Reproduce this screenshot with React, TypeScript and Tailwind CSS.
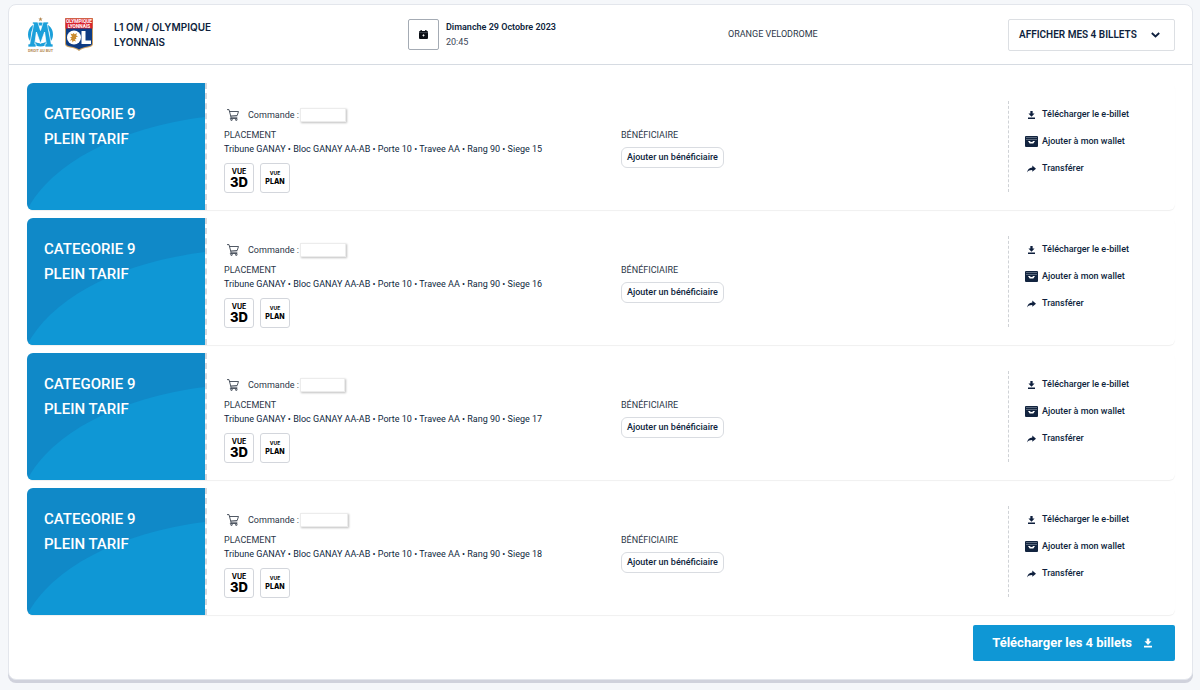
type Ticket = { seat: number; boxWidth: string };

const tickets: Ticket[] = [
  { seat: 15, boxWidth: "w-[46px]" },
  { seat: 16, boxWidth: "w-[46px]" },
  { seat: 17, boxWidth: "w-[45px]" },
  { seat: 18, boxWidth: "w-12" },
];

function OmLogo() {
  return (
    <svg viewBox="0 0 27 35" className="h-[35px] w-[27px]" role="img" aria-label="Olympique de Marseille">
      <path d="M13.500 0l.6 1.600h1.600l-1.300 1 .5 1.600-1.400-1-1.400 1 .5-1.600-1.300-1h1.600z" fill="#b58a55" />
      <ellipse cx="13.500" cy="17.500" rx="11" ry="10.500" fill="none" stroke="#1ba0da" strokeWidth="3" />
      <path
        d="M5.500 5h5.300l2.700 8.500L16.200 5h5.300v2h-1.200l4 20H26v3h-8v-3h1.200L17.600 15l-4.100 11.500L9.400 15 7.800 27H9v3H1v-3h1.700L6.700 7H5.500z"
        fill="#1ba0da"
        stroke="#fff"
        strokeWidth=".7"
      />
      <text x="13.500" y="34.500" textAnchor="middle" fontSize="3.800" fontWeight="700" fontFamily="Roboto, sans-serif" fill="#b58a55">
        DROIT AU BUT
      </text>
    </svg>
  );
}

function OlLogo() {
  return (
    <svg viewBox="0 0 28 33" className="h-[33px] w-7" role="img" aria-label="Olympique Lyonnais">
      <path d="M0 0h28v26c0 2-2 3-5 3.500-4 .7-7 1.500-9 3.500-2-2-5-2.800-9-3.500-3-.5-5-1.500-5-3.500z" fill="#c9a063" />
      <path d="M1 10h26v15.500c0 2-2 2.500-4.500 3-3.500.6-6.500 1.500-8.500 3-2-1.500-5-2.400-8.500-3C3 28 1 27.500 1 25.500z" fill="#0d3b83" />
      <path d="M.5.5h27V10.500H.5z" fill="#d9232e" />
      <text x="14" y="5" textAnchor="middle" fontSize="4.800" fontWeight="700" fontFamily="Roboto, sans-serif" fill="#fff">OLYMPIQUE</text>
      <text x="14" y="9.500" textAnchor="middle" fontSize="4.800" fontWeight="700" fontFamily="Roboto, sans-serif" fill="#fff">LYONNAIS</text>
      <circle cx="9" cy="19.500" r="7" fill="#fff" />
      <path d="M5.500 15.500l2 .7 1-1.200 1.300 1.200 2.200-1.200-.8 2.500 1.800 1-2.200.8.700 1.700-1.800.2 1.300 2.300-2.200-.7-1.300 1.700-.4-2.500-2.300.7 1.800-2.300-1.600-1 2-.7z" fill="#c98b2f" />
      <path d="M16.500 13h4v9.500H26V26h-9.500z" fill="#fff" />
    </svg>
  );
}

function DownloadIcon({ className }: { className: string }) {
  return (
    <svg viewBox="0 0 8 9" className={className} fill="currentColor" aria-hidden="true">
      <path d="M2.700 0h2.600v2.800h2.200L4 6.400.5 2.800h2.200zM0 7.300h8V9H0z" />
    </svg>
  );
}

function WalletIcon() {
  return (
    <svg viewBox="0 0 13 11" className="h-[11px] w-[13px]" aria-hidden="true">
      <rect width="13" height="11" rx="1" fill="#12243f" />
      <path d="M1 1.500h11M1 3.500h11" stroke="#8995a5" strokeWidth=".6" />
      <path d="M3 5h1.800c.3.700.9 1 1.700 1s1.400-.3 1.700-1H10L8.300 7.500H4.700z" fill="#fff" />
    </svg>
  );
}

function ShareIcon() {
  return (
    <svg viewBox="0 0 9 8" className="h-2 w-[9px]" fill="currentColor" aria-hidden="true">
      <path d="M5.300.500L9 3.700 5.300 6.800V5C3 4.900 1.300 5.600 0 7.500.4 4.700 2.200 2.700 5.300 2.400z" />
    </svg>
  );
}

function CartIcon() {
  return (
    <svg viewBox="0 0 12 12" className="h-3 w-3" fill="none" stroke="#3d4652" strokeWidth=".9" aria-hidden="true">
      <path d="M0 .6h2l2 7.600h6.300M2.600 2.500h8.900l-1.300 4-6.500.5M4 8.200l-.7 1.300h7" />
      <circle cx="4.500" cy="10.700" r=".8" />
      <circle cx="9.300" cy="10.700" r=".8" />
    </svg>
  );
}

function CalendarIcon() {
  return (
    <svg viewBox="0 0 9 9" className="size-[9px]" aria-hidden="true">
      <path d="M1.500 0h1.300v1h3.400V0h1.300v1H8a1 1 0 011 1v6a1 1 0 01-1 1H1a1 1 0 01-1-1V2a1 1 0 011-1h.5z" fill="#0b0f16" />
      <path d="M0 2.600h9" stroke="#8b929c" strokeWidth=".4" />
      <path d="M4.500 4.300v2.200M3.400 5.400h2.200" stroke="#fff" strokeWidth=".8" />
    </svg>
  );
}

function Header() {
  return (
    <header className="grid grid-cols-[381fr_320fr_280fr_167px] items-center border-b border-[#d6dbe2] pt-3 pr-[17px] pb-3 pl-[18px]">
      <div className="flex items-center">
        <OmLogo />
        <div className="ml-[11px]">
          <OlLogo />
        </div>
        <h1 className="ml-[21px] w-28 font-[Inter,sans-serif] text-[10px] leading-[15px] font-semibold">L1 OM / OLYMPIQUE LYONNAIS</h1>
      </div>
      <div className="flex items-center gap-[7px]">
        <div className="flex size-[31px] items-center justify-center rounded-[2px] border border-[#a4abb4]">
          <CalendarIcon />
        </div>
        <div className="text-[9px] leading-[15px]">
          <p className="font-semibold">Dimanche 29 Octobre 2023</p>
          <p className="text-[#3b4657]">20:45</p>
        </div>
      </div>
      <p className="text-[9px] text-[#2c3748]">ORANGE VELODROME</p>
      <button type="button" className="flex h-8 items-center justify-between rounded-[2px] border border-[#dcdfe3] pr-[14px] pl-[10px] text-[10px] font-semibold">
        AFFICHER MES 4 BILLETS
        <svg viewBox="0 0 9 6" className="h-[6px] w-[9px]" fill="none" stroke="currentColor" strokeWidth="1.800" aria-hidden="true">
          <path d="M.8 1l3.700 3.500L8.200 1" />
        </svg>
      </button>
    </header>
  );
}

function TicketRow({ seat, boxWidth }: Ticket) {
  return (
    <article className="flex h-[127px] rounded-md shadow-[0_1px_1px_#00000010]">
      <div className="relative w-[178px] shrink-0 overflow-hidden rounded-l-md bg-[#1089c8]">
        <svg viewBox="0 0 178 127" preserveAspectRatio="none" className="absolute inset-0 size-full" aria-hidden="true">
          <path d="M0 127C24 81 90 45 178 34v93z" fill="#0f97d5" />
        </svg>
        <h2 className="relative px-[17px] pt-[19px] text-[15px] leading-[25px] font-medium text-white">
          CATEGORIE 9<br />PLEIN TARIF
        </h2>
      </div>
      <div className="grid flex-1 grid-cols-[397fr_387fr_167px] border-l-2 border-dashed border-[#d5d8dd] pl-[17px]">
        <div className="pt-6">
          <p className="flex items-center pl-[3px] text-[9px] leading-4 text-[#2c3748]">
            <CartIcon />
            <span className="ml-[9px]">Commande :</span>
            <span className={`${boxWidth} ml-px h-[14px] border border-[#ececec] bg-white shadow-[1px_1px_2px_#00000040]`} />
          </p>
          <p className="mt-[5px] text-[9px] leading-[14px] text-[#2c3748]">PLACEMENT</p>
          <p className="text-[9px] leading-[14px]">
            Tribune GANAY • Bloc GANAY AA-AB • Porte 10 • Travee AA • Rang 90 • Siege {seat}
          </p>
          <div className="mt-[7px] flex gap-[6px] font-[Inter,sans-serif] text-black">
            <button type="button" className="flex size-[30px] flex-col items-center justify-center rounded-[3px] border border-[#d3d6dc]">
              <span className="text-[7px] leading-[9px] font-bold">VUE</span>
              <span className="text-[13px] leading-[13px] font-extrabold">3D</span>
            </button>
            <button type="button" className="flex size-[30px] flex-col items-center justify-center rounded-[3px] border border-[#d3d6dc]">
              <span className="text-[5px] leading-[7px] font-bold">VUE</span>
              <span className="text-[7px] leading-[9px] font-extrabold">PLAN</span>
            </button>
          </div>
        </div>
        <div className="pt-[45px]">
          <p className="text-[9px] leading-[14px] text-[#2c3748]">BÉNÉFICIAIRE</p>
          <button type="button" className="mt-[5px] h-[21px] rounded-md border border-[#d9dce1] px-[5px] text-[9px] font-medium">
            Ajouter un bénéficiaire
          </button>
        </div>
        <div className="my-[18px] border-l border-dashed border-[#cfd2d6] pl-4 text-[9px] font-medium">
          {[
            { label: "Télécharger le e-billet", icon: <DownloadIcon className="h-2 w-[7px]" /> },
            { label: "Ajouter à mon wallet", icon: <WalletIcon /> },
            { label: "Transférer", icon: <ShareIcon /> },
          ].map(({ label, icon }) => (
            <a key={label} href="#" className="flex h-[27px] items-center gap-1">
              <span className="flex w-[13px] justify-center">{icon}</span>
              {label}
            </a>
          ))}
        </div>
      </div>
    </article>
  );
}

export default function App() {
  return (
    <div className="min-h-screen bg-[#f5f7fa] pt-1 pr-[7px] pb-2 pl-2 font-[Roboto,sans-serif] text-[#0e1f3d]">
      <main className="rounded-lg border border-[#e3e6ec] bg-white shadow-[0_3px_0_#d0d2dc]">
        <Header />
        <div className="flex flex-col gap-2 pt-[18px] pr-[17px] pb-[18px] pl-[18px]">
          {tickets.map((ticket) => (
            <TicketRow key={ticket.seat} {...ticket} />
          ))}
          <button type="button" className="mt-[2px] flex h-9 items-center gap-3 self-end rounded-[2px] bg-[#0f97d5] pr-[23px] pl-[19px] text-[13px] font-bold text-white">
            Télécharger les 4 billets
            <DownloadIcon className="h-[10px] w-2" />
          </button>
        </div>
      </main>
    </div>
  );
}
